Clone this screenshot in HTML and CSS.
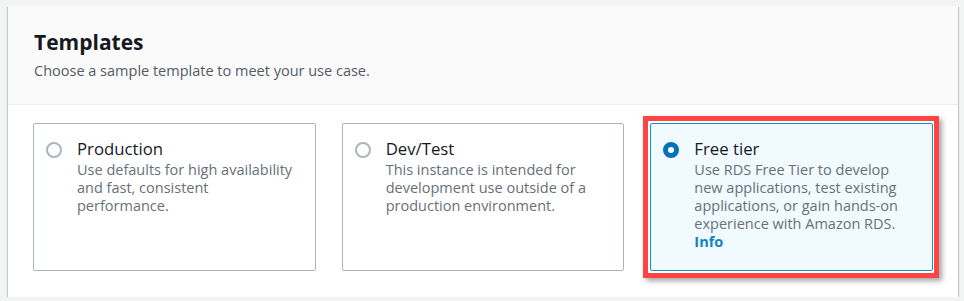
FILE: index.html
```html
<!DOCTYPE html>
<html lang="en">
<head>
<meta charset="utf-8">
<title>Templates</title>
<link rel="stylesheet" href="styles.css">
</head>
<body>
<section class="panel">
  <header class="panel-header">
    <h2 class="panel-title">Templates</h2>
    <p class="panel-desc">Choose a sample template to meet your use case.</p>
  </header>
  <div class="panel-body">
    <div class="tiles">
      <label class="tile">
        <span class="radio"></span>
        <span class="tile-text">
          <span class="tile-title">Production</span>
          <span class="tile-desc">Use defaults for high availability and fast, consistent performance.</span>
        </span>
      </label>
      <label class="tile">
        <span class="radio"></span>
        <span class="tile-text">
          <span class="tile-title">Dev/Test</span>
          <span class="tile-desc">This instance is intended for development use outside of a production environment.</span>
        </span>
      </label>
      <label class="tile tile-selected">
        <span class="radio radio-checked"></span>
        <span class="tile-text">
          <span class="tile-title">Free tier</span>
          <span class="tile-desc">Use RDS Free Tier to develop new applications, test existing applications, or gain hands-on experience with Amazon RDS.</span>
          <a class="info-link" href="#">Info</a>
        </span>
        <span class="highlight"></span>
      </label>
    </div>
  </div>
</section>
</body>
</html>
```

FILE: styles.css
```css
html, body {
  margin: 0;
  padding: 0;
}
body {
  background: #f2f3f3;
  padding: 6px 6px 0 8px;
  font-family: "Open Sans", "Liberation Sans", sans-serif;
  color: #16191f;
}
.panel {
  width: 950px;
  background: #ffffff;
  box-shadow: 0 1px 1px 0 rgba(0, 28, 36, 0.3), 1px 1px 1px 0 rgba(0, 28, 36, 0.15), -1px 1px 1px 0 rgba(0, 28, 36, 0.15);
}
.panel-header {
  background: #fafafa;
  border-bottom: 1px solid #eaeded;
  padding: 20.5px 26px 23px 26px;
}
.panel-title {
  margin: 0;
  font-size: 21px;
  line-height: 30px;
  font-weight: 700;
  color: #16191f;
}
.panel-desc {
  margin: 4.5px 0 0 0;
  font-size: 14.5px;
  line-height: 20px;
  color: #545b64;
}
.panel-body {
  padding: 18px 25px 26px 25px;
}
.tiles {
  display: grid;
  grid-template-columns: 1fr 1fr 1fr;
  column-gap: 26px;
}
.tile {
  position: relative;
  display: flex;
  align-items: flex-start;
  gap: 15px;
  border: 1px solid #aab7b8;
  border-radius: 2px;
  padding: 14px 16px 19px 12px;
  min-height: 113px;
  background: #ffffff;
}
.tile-selected {
  background: #f1faff;
  border-color: #1590bd;
}
.radio {
  flex: none;
  box-sizing: border-box;
  width: 16px;
  height: 16px;
  margin-top: 4px;
  border-radius: 50%;
  border: 2px solid #aab7b8;
  background: #ffffff;
}
.radio-checked {
  border: 5px solid #0073bb;
}
.tile-text {
  display: flex;
  flex-direction: column;
  align-items: flex-start;
}
.tile-title {
  font-size: 16.75px;
  line-height: 22px;
  color: #16191f;
}
.tile-desc {
  margin-top: 1px;
  font-size: 14.5px;
  line-height: 18px;
  color: #687078;
}
.info-link {
  font-size: 14.5px;
  line-height: 18px;
  font-weight: 700;
  color: #0f86c0;
  text-decoration: none;
}
.highlight {
  position: absolute;
  top: -8px;
  left: -8px;
  right: -7px;
  bottom: -8px;
  border: 5px solid #ff4444;
  box-shadow: 3px 3px 5px rgba(0, 0, 0, 0.35);
  pointer-events: none;
}
```
